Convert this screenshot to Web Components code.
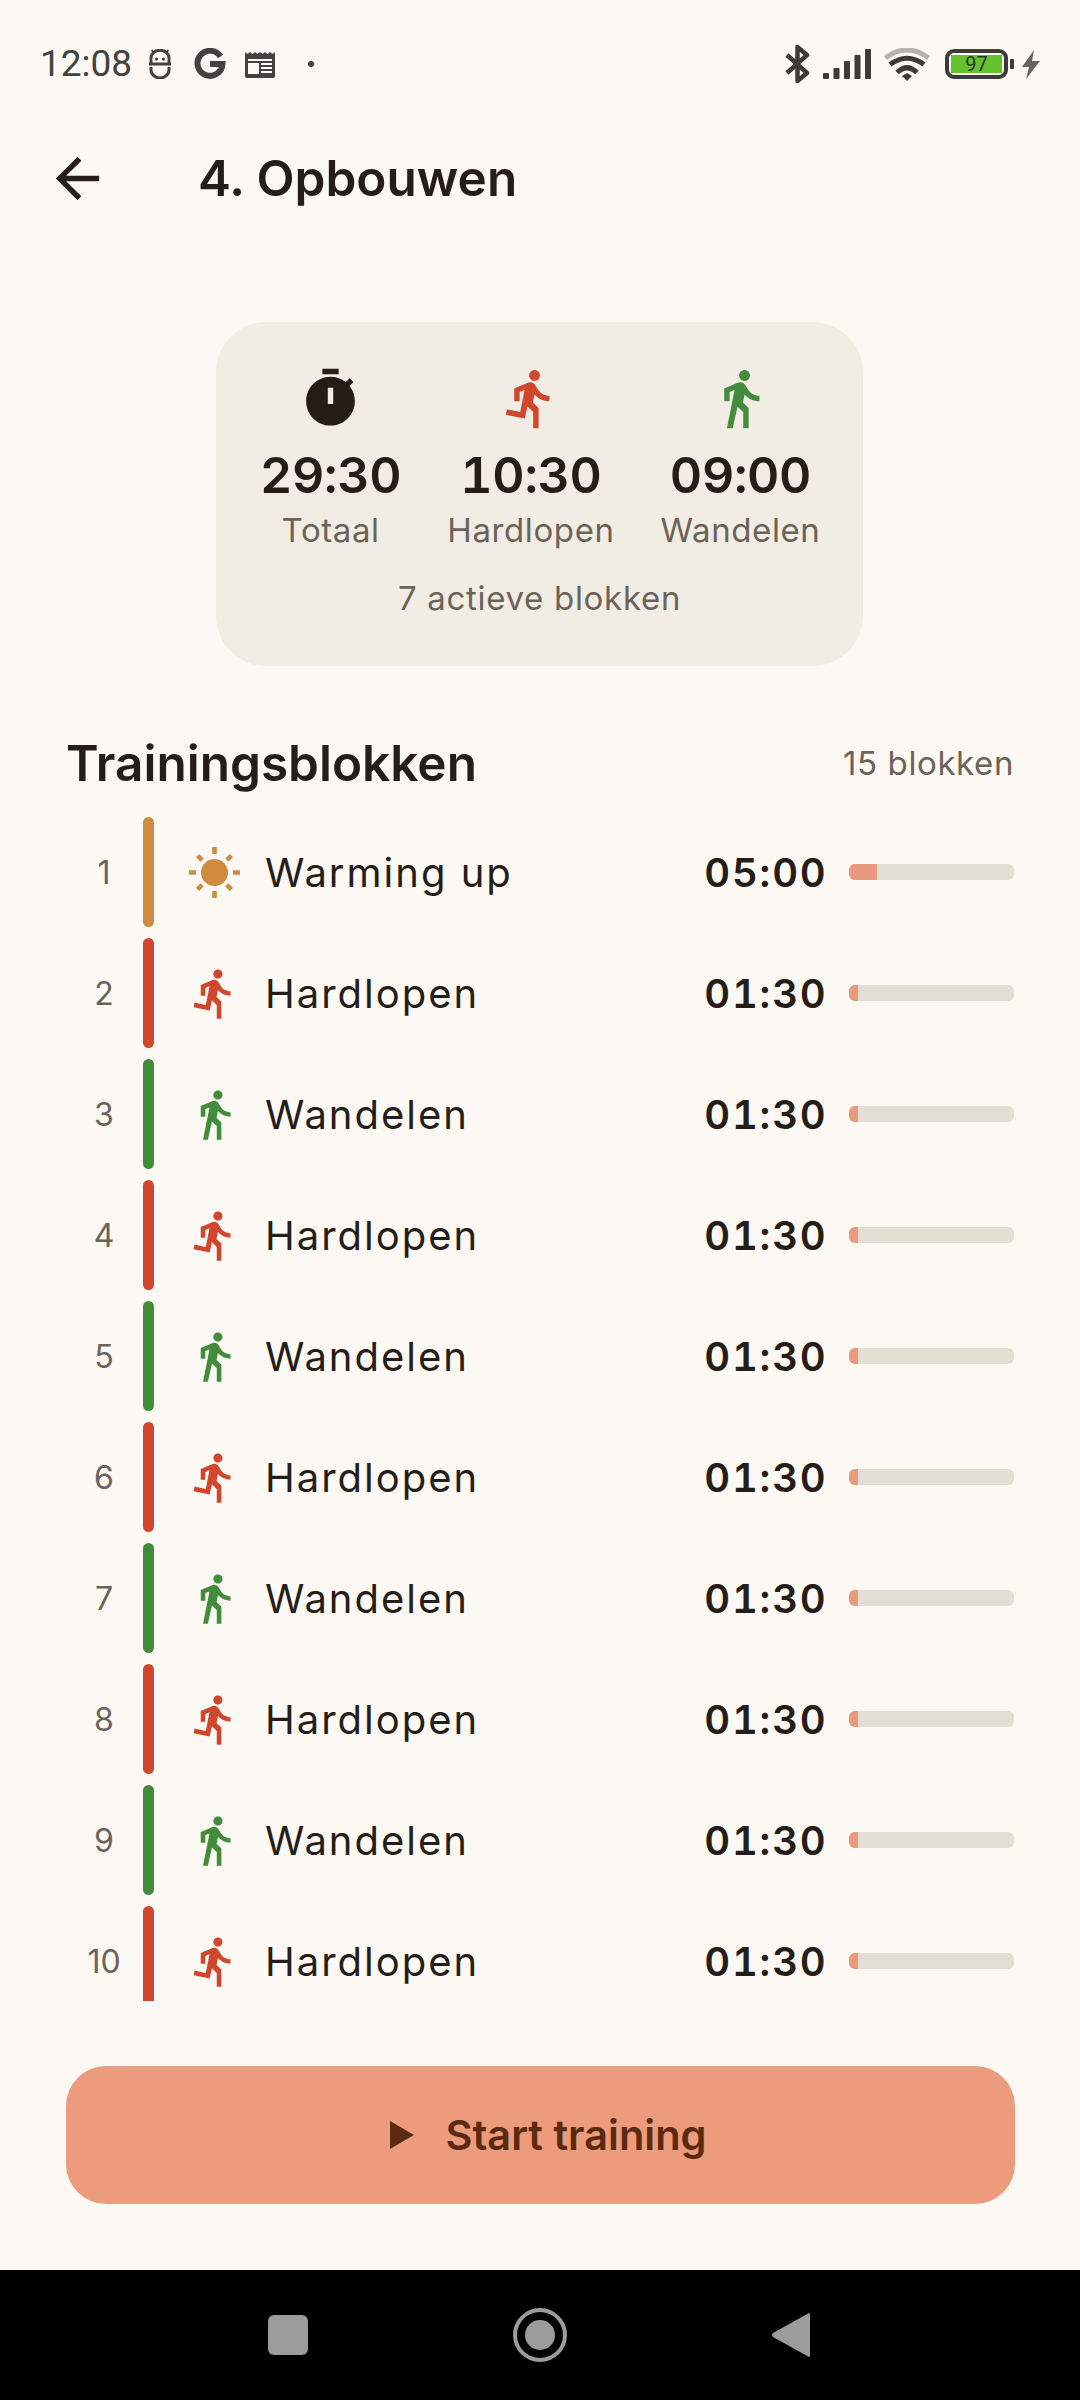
<!DOCTYPE html>
<html lang="nl">
<head>
<meta charset="utf-8">
<title>4. Opbouwen</title>
<style>
  html,body{margin:0;padding:0;background:#fcf9f4}
  body{font-family:Inter,"Liberation Sans",sans-serif;color:#241d18}
</style>
</head>
<body>
<phone-screen>
  <status-bar slot="status"></status-bar>
  <app-bar slot="top">4. Opbouwen</app-bar>
  <summary-card slot="top">
    <stat-item icon="timer" value="29:30">Totaal</stat-item>
    <stat-item icon="run" value="10:30">Hardlopen</stat-item>
    <stat-item icon="walk" value="09:00">Wandelen</stat-item>
    <span slot="note">7 actieve blokken</span>
  </summary-card>
  <section-head slot="top" count="15 blokken">Trainingsblokken</section-head>
  <block-row n="1" kind="warm" time="05:00" fill="28">Warming up</block-row>
  <block-row n="2" kind="run" time="01:30" fill="9">Hardlopen</block-row>
  <block-row n="3" kind="walk" time="01:30" fill="9">Wandelen</block-row>
  <block-row n="4" kind="run" time="01:30" fill="9">Hardlopen</block-row>
  <block-row n="5" kind="walk" time="01:30" fill="9">Wandelen</block-row>
  <block-row n="6" kind="run" time="01:30" fill="9">Hardlopen</block-row>
  <block-row n="7" kind="walk" time="01:30" fill="9">Wandelen</block-row>
  <block-row n="8" kind="run" time="01:30" fill="9">Hardlopen</block-row>
  <block-row n="9" kind="walk" time="01:30" fill="9">Wandelen</block-row>
  <block-row n="10" kind="run" time="01:30" fill="9">Hardlopen</block-row>
  <start-button slot="bottom">Start training</start-button>
  <nav-bar slot="bottom"></nav-bar>
</phone-screen>

<script>
const ICONS={
  run:'<path d="M13.49 5.48c1.1 0 2-.9 2-2s-.9-2-2-2-2 .9-2 2 .9 2 2 2zm-3.6 13.9l1-4.4 2.1 2v6h2v-7.5l-2.1-2 .6-3c1.3 1.5 3.3 2.5 5.5 2.5v-2c-1.9 0-3.5-1-4.3-2.4l-1-1.6c-.4-.6-1-1-1.7-1-.3 0-.5.1-.8.1l-5.2 2.2v4.7h2v-3.4l1.8-.7-1.6 8.1-4.9-1-.4 2 7 1.4z"/>',
  walk:'<path d="M13.5 5.5c1.1 0 2-.9 2-2s-.9-2-2-2-2 .9-2 2 .9 2 2 2zM9.8 8.9L7 23h2.1l1.8-8 2.1 2v6h2v-7.5l-2.1-2 .6-3C14.8 12 16.8 13 19 13v-2c-1.9 0-3.5-1-4.3-2.4l-1-1.6c-.4-.6-1-1-1.7-1-.3 0-.5.1-.8.1L6 8.3V13h2V9.6l1.8-.7z"/>',
  timer:'<path d="M15 1H9v2h6V1zm4.03 6.39l1.42-1.42c-.43-.51-.9-.99-1.41-1.41l-1.42 1.42C16.07 4.74 14.12 4 12 4c-4.97 0-9 4.03-9 9s4.02 9 9 9 9-4.03 9-9c0-2.12-.74-4.07-1.97-5.61zM13 14h-2V8h2v6z"/>',
  warm:'<circle cx="12" cy="12" r="5.9"/><path d="M11 .9h2v3h-2zM11 20.1h2v3h-2zM.9 11h3v2h-3zM20.1 11h3v2h-3zM5.3 3.9l2 2-1.4 1.4-2-2zM18.7 3.9l1.400 1.400-2 2-1.400-1.400zM5.900 16.700l1.400 1.400-2 2-1.400-1.400zM18.100 16.700l2 2-1.400 1.400-2-2z"/>',
  back:'<path d="M20 11H7.83l5.59-5.59L12 4l-8 8 8 8 1.41-1.41L7.83 13H20v-2z"/>'
};
const COLORS={run:'#d1472d',walk:'#438c3c',warm:'#cf8b3f',timer:'#241d18'};
const svgIcon=(name,size)=>`<svg width="${size}" height="${size}" viewBox="0 0 24 24" fill="currentColor" style="display:block;color:${COLORS[name]||'currentColor'}">${ICONS[name]}</svg>`;

class Base extends HTMLElement{
  render(html){
    this.attachShadow({mode:'open'});
    this.shadowRoot.innerHTML=html;
  }
}

class PhoneScreen extends Base{
  constructor(){
    super();
    this.render(`<style>
      :host{display:flex;flex-direction:column;width:1080px;height:2400px;overflow:hidden;background:#fcf9f4}
      .list{flex:1;min-height:0;overflow:hidden;display:flex;flex-direction:column;gap:11px}
    </style>
    <slot name="status"></slot>
    <slot name="top"></slot>
    <div class="list"><slot></slot></div>
    <slot name="bottom"></slot>`);
  }
}

class StatusBar extends Base{
  constructor(){
    super();
    this.render(`<style>
      :host{display:flex;align-items:center;height:128px;padding:0 40px;box-sizing:border-box;color:#444240;font-family:Roboto,sans-serif;flex-shrink:0}
      svg{display:block;flex-shrink:0}
      .time{font-size:37px;line-height:40px;margin-right:16px}
      .spacer{flex:1}
      .left,.right{display:flex;align-items:center}
      .batt{position:relative;width:63px;height:30px;box-sizing:border-box;border:4px solid #3d3b38;border-radius:9px;padding:2px;margin-right:2px}
      .batt i{display:block;height:100%;background:#65c22f}
      .batt b{position:absolute;inset:0;display:flex;align-items:center;justify-content:center;font:400 20px/1 Roboto,sans-serif;color:#1d3a10}
      .nub{width:4px;height:10px;background:#3d3b38;border-radius:1px;margin-right:7px}
    </style>
    <div class="left">
      <span class="time">12:08</span>
      <svg width="24" height="30" viewBox="0 0 24 30" fill="none" stroke="currentColor" stroke-width="3" style="margin-right:22px">
        <path d="M3 15V9a7 6 0 0 1 18 0v6"/><path d="M1 15h22"/><path d="M3 18v3a9 8 0 0 0 18 0v-3"/>
        <circle cx="8.500" cy="10" r="1.600" fill="currentColor" stroke="none"/><circle cx="15.500" cy="10" r="1.600" fill="currentColor" stroke="none"/>
        <path d="M5 3L4 1M19 3l1-2M12 2V0" stroke-width="2"/>
      </svg>
      <svg width="32" height="32" viewBox="0 0 32 32" fill="none" stroke="currentColor" stroke-width="6" style="margin-right:19px">
        <path d="M26.500 8.500A12.500 12.500 0 1 0 28.500 16H16"/>
      </svg>
      <svg width="30" height="28" viewBox="0 0 30 28" fill="currentColor" style="margin-right:33px">
        <path d="M0 2l2.500 2L5 2l2.500 2L10 2l2.500 2L15 2l2.500 2L20 2l2.500 2L25 2l2.500 2L30 2v24a2 2 0 0 1-2 2H2a2 2 0 0 1-2-2z"/>
        <path d="M3 9h24v2H3zM3 13h11v11H3z" fill="#fcf9f4"/>
        <path d="M16 13h11v2H16zM16 17h11v2H16zM16 21h11v2H16z" fill="#fcf9f4"/>
      </svg>
      <svg width="6" height="6"><circle cx="3" cy="3" r="3" fill="currentColor"/></svg>
    </div>
    <div class="spacer"></div>
    <div class="right">
      <svg width="25" height="38" viewBox="0 0 25 38" fill="none" stroke="#3d3b38" stroke-width="4.500" stroke-linejoin="round" style="margin-right:13px">
        <path d="M2 10l20 18-9.500 8V2L22 10 2 28"/>
      </svg>
      <svg width="48" height="30" viewBox="0 0 48 30" fill="#3d3b38" style="margin-right:13px">
        <rect x="0" y="24" width="6" height="6" rx="1"/><rect x="10.500" y="19" width="6" height="11" rx="1"/><rect x="21" y="12" width="6" height="18" rx="1"/><rect x="31.500" y="6" width="6" height="24" rx="1"/><rect x="42" y="0" width="6" height="30" rx="1"/>
      </svg>
      <svg width="46" height="33" viewBox="0 0 46 33" fill="none" stroke-width="5" style="margin-right:15px">
        <path d="M1.500 10Q23-6 44.500 10" stroke="#b5b3ae"/>
        <path d="M6 16.500Q23 4 40 16.500" stroke="#3d3b38"/>
        <path d="M13 24.500Q23 15 33 24.500" stroke="#3d3b38"/>
        <path d="M18 28l5-3 5 3-5 5z" fill="#3d3b38"/>
      </svg>
      <div class="batt"><i></i><b>97</b></div>
      <div class="nub"></div>
      <svg width="19" height="29" viewBox="0 0 19 29" fill="#666462"><path d="M13 0L1 17h7L5 29 19 11h-8z"/></svg>
    </div>`);
  }
}

class AppBar extends Base{
  constructor(){
    super();
    this.render(`<style>
      :host{display:flex;align-items:center;height:100px;padding-left:45px;flex-shrink:0}
      .t{margin-left:88px;font-size:49.500px;font-weight:600;line-height:60px;color:#241d18}
    </style>
    ${svgIcon('back',65)}<div class="t"><slot></slot></div>`);
  }
}

class SummaryCard extends Base{
  constructor(){
    super();
    this.render(`<style>
      :host{display:flex;justify-content:center;margin-top:94px;flex-shrink:0}
      .card{width:647px;height:344px;box-sizing:border-box;margin-left:-1px;background:#f2ede4;border-radius:50px;padding:44px 0 0 44px}
      .stats{display:flex;gap:46px}
      .note{margin:24px 0 0 -44px;text-align:center;font-size:33px;line-height:44px;color:#6b635a;letter-spacing:.7px}
    </style>
    <div class="card"><div class="stats"><slot></slot></div><div class="note"><slot name="note"></slot></div></div>`);
  }
}

class StatItem extends Base{
  constructor(){
    super();
    this.render(`<style>
      :host{display:flex;flex-direction:column;align-items:center;flex:none}
      .v{margin-top:14px;font-size:50px;font-weight:600;line-height:60px;color:#241d18;font-variant-numeric:tabular-nums;letter-spacing:-.3px}
      .l{margin-top:3px;font-size:33px;line-height:44px;color:#6b635a;letter-spacing:.6px;white-space:nowrap}
    </style>
    ${svgIcon(this.getAttribute('icon'),65)}
    <div class="v">${this.getAttribute('value')}</div>
    <div class="l"><slot></slot></div>`);
  }
}

class SectionHead extends Base{
  constructor(){
    super();
    this.render(`<style>
      :host{display:flex;align-items:center;justify-content:space-between;height:60px;margin:67px 66px 24px;flex-shrink:0}
      .t{font-size:49.500px;font-weight:600;color:#241d18}
      .c{font-size:33px;color:#6b635a;letter-spacing:.6px}
    </style>
    <div class="t"><slot></slot></div><div class="c">${this.getAttribute('count')}</div>`);
  }
}

class BlockRow extends Base{
  constructor(){
    super();
    const kind=this.getAttribute('kind');
    this.render(`<style>
      :host{display:flex;align-items:center;height:110px;flex-shrink:0;padding:0 66px 0 68px;box-sizing:content-box}
      .n{width:72px;text-align:center;font-size:32px;color:#6b635a}
      .bar{width:11px;height:110px;margin-left:3px;border-radius:6px;background:${COLORS[kind]}}
      .ic{margin-left:33px}
      .name{margin-left:23px;flex:1;font-size:40px;letter-spacing:2px;color:#241d18}
      .time{font-size:40px;font-weight:600;letter-spacing:1.800px;color:#241d18;font-variant-numeric:tabular-nums}
      .track{width:165px;height:16px;margin-left:21.500px;border-radius:6px;background:#e3ded3;overflow:hidden}
      .track i{display:block;height:100%;background:#e99a7c}
    </style>
    <div class="n">${this.getAttribute('n')}</div>
    <div class="bar"></div>
    <div class="ic">${svgIcon(kind,55)}</div>
    <div class="name"><slot></slot></div>
    <div class="time">${this.getAttribute('time')}</div>
    <div class="track"><i style="width:${this.getAttribute('fill')}px"></i></div>`);
  }
}

class StartButton extends Base{
  constructor(){
    super();
    this.render(`<style>
      :host{display:block;padding:65px 65px 66px 66px;flex-shrink:0}
      .btn{display:flex;align-items:center;justify-content:center;height:138px;padding-left:16px;border-radius:40px;background:#ec9b7c;color:#5c2a12;font-size:41.500px;font-weight:600}
      svg{display:block;margin-right:31px}
    </style>
    <div class="btn"><svg width="24" height="28" viewBox="0 0 24 28" fill="currentColor"><path d="M0 0l24 14L0 28z"/></svg><slot></slot></div>`);
  }
}

class NavBar extends Base{
  constructor(){
    super();
    this.render(`<style>
      :host{display:flex;align-items:center;height:130px;background:#000;flex-shrink:0;padding-left:268px}
      svg{display:block;fill:#9c9c9c}
    </style>
    <svg width="40" height="40"><rect width="40" height="40" rx="6"/></svg>
    <svg width="54" height="54" viewBox="0 0 54 54" style="margin-left:205px"><circle cx="27" cy="27" r="25" fill="none" stroke="#9c9c9c" stroke-width="4"/><circle cx="27" cy="27" r="15"/></svg>
    <svg width="38" height="46" viewBox="0 0 38 46" style="margin-left:205px"><path d="M37 1a1 1 0 0 1 1 1v42a1 1 0 0 1-1 1L1 25a3 3 0 0 1 0-4z"/></svg>`);
  }
}

customElements.define('phone-screen',PhoneScreen);
customElements.define('status-bar',StatusBar);
customElements.define('app-bar',AppBar);
customElements.define('summary-card',SummaryCard);
customElements.define('stat-item',StatItem);
customElements.define('section-head',SectionHead);
customElements.define('block-row',BlockRow);
customElements.define('start-button',StartButton);
customElements.define('nav-bar',NavBar);
</script>
</body>
</html>
